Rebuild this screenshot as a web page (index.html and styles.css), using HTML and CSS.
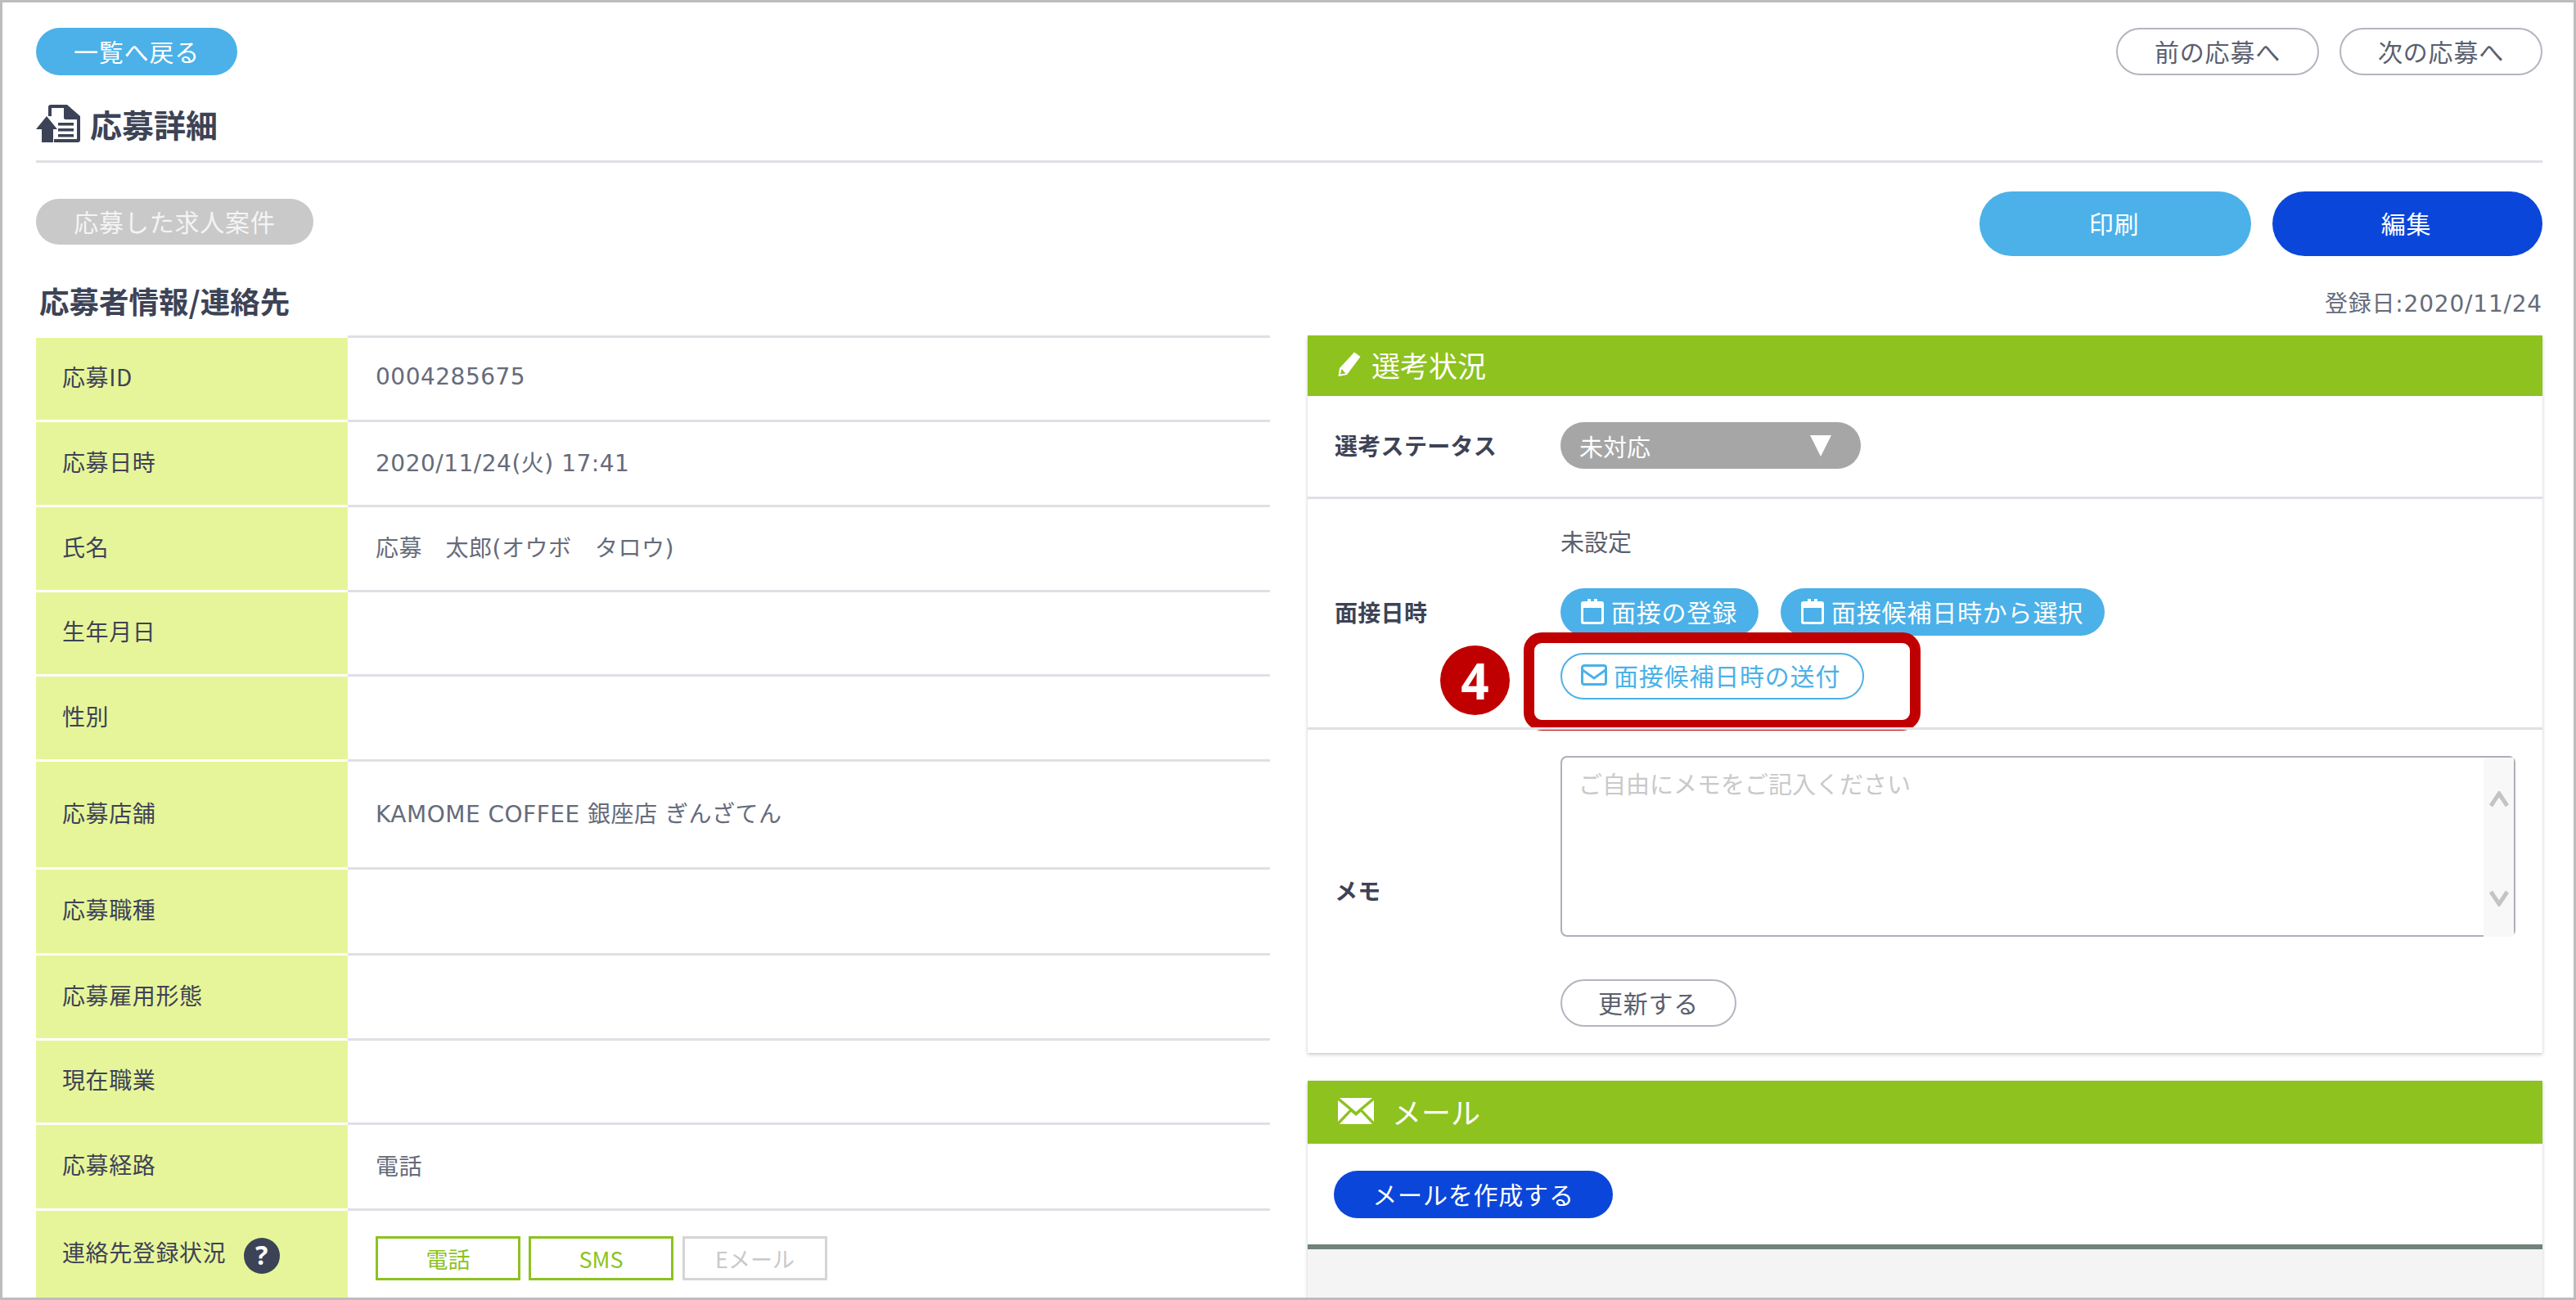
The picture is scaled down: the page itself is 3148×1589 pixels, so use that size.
FILE: index.html
```html
<!DOCTYPE html>
<html lang="ja">
<head>
<meta charset="utf-8">
<title>応募詳細</title>
<link rel="stylesheet" href="styles.css">
</head>
<body>
<div class="frame">
  <div class="topbar">
    <a class="pill pill-sky back">一覧へ戻る</a>
    <div class="nav">
      <a class="pill pill-line nav-btn">前の応募へ</a>
      <a class="pill pill-line nav-btn">次の応募へ</a>
    </div>
  </div>
  <div class="title">
    <svg class="title-icon" viewBox="0 0 56 46" aria-hidden="true">
      <path class="ink" d="M15 14V3a3 3 0 0 1 3-3h20l16 14v29a3 3 0 0 1-3 3H22v-4h28V18H36a2 2 0 0 1-2-2V4H19v10z"/>
      <path class="ink" d="M38 5.500V14h10z"/>
      <path class="ink" d="M13 14 26 30h-5v16H7V30H0z"/>
      <path class="ink" d="M27 22h19v3.500H27zM27 29h19v3.500H27zM27 36h19v3.500H27z"/>
    </svg>
    <h1>応募詳細</h1>
  </div>
  <div class="toolbar">
    <a class="pill job">応募した求人案件</a>
    <div class="actions">
      <a class="pill pill-sky action">印刷</a>
      <a class="pill pill-blue action edit">編集</a>
    </div>
  </div>
  <div class="section-head">
    <h2>応募者情報/連絡先</h2>
    <span class="regdate">登録日:2020/11/24</span>
  </div>
  <div class="columns">
    <div class="table">
      <div class="row short"><div class="th">応募ID</div><div class="td">0004285675</div></div>
      <div class="row"><div class="th">応募日時</div><div class="td">2020/11/24(火) 17:41</div></div>
      <div class="row"><div class="th">氏名</div><div class="td">応募　太郎(オウボ　タロウ)</div></div>
      <div class="row short"><div class="th">生年月日</div><div class="td"></div></div>
      <div class="row"><div class="th">性別</div><div class="td"></div></div>
      <div class="row tall"><div class="th">応募店舗</div><div class="td">KAMOME COFFEE 銀座店 ぎんざてん</div></div>
      <div class="row long"><div class="th">応募職種</div><div class="td"></div></div>
      <div class="row"><div class="th">応募雇用形態</div><div class="td"></div></div>
      <div class="row short"><div class="th">現在職業</div><div class="td"></div></div>
      <div class="row long"><div class="th">応募経路</div><div class="td">電話</div></div>
      <div class="row last">
        <div class="th">連絡先登録状況
          <svg class="help" viewBox="0 0 44 44" aria-hidden="true"><circle class="ink" cx="22" cy="22" r="22"/><text class="help-mark" x="22" y="33">?</text></svg>
        </div>
        <div class="td tags">
          <span class="tag on">電話</span>
          <span class="tag on">SMS</span>
          <span class="tag off">Eメール</span>
        </div>
      </div>
    </div>
    <div class="side">
      <section class="panel">
        <header class="panel-head first">
          <svg class="pen" viewBox="0 0 30 32" aria-hidden="true">
            <path d="M21 1.500 28.500 7 12 29 1.500 31 3 21z M5.500 22 4 28.500 10.500 27.500 z" fill-rule="evenodd"/>
          </svg>
          <span>選考状況</span>
        </header>
        <div class="form-row status-row">
          <div class="form-label">選考ステータス</div>
          <div class="select"><span>未対応</span><svg class="caret" viewBox="0 0 26 26" aria-hidden="true"><path d="M0 0h26L13 26z"/></svg></div>
        </div>
        <div class="form-row interview-row">
          <div class="form-label">面接日時</div>
          <div class="interview">
            <div class="unset">未設定</div>
            <div class="btn-line">
              <a class="pill pill-sky chip">
                <svg class="cal" viewBox="0 0 30 32" aria-hidden="true"><path d="M4 4h5V1h4v3h4V1h4v3h5a3 3 0 0 1 3 3v22a3 3 0 0 1-3 3H4a3 3 0 0 1-3-3V7a3 3 0 0 1 3-3zM4 12v16a1 1 0 0 0 1 1h20a1 1 0 0 0 1-1V12z" fill-rule="evenodd"/></svg>
                面接の登録</a>
              <a class="pill pill-sky chip">
                <svg class="cal" viewBox="0 0 30 32" aria-hidden="true"><path d="M4 4h5V1h4v3h4V1h4v3h5a3 3 0 0 1 3 3v22a3 3 0 0 1-3 3H4a3 3 0 0 1-3-3V7a3 3 0 0 1 3-3zM4 12v16a1 1 0 0 0 1 1h20a1 1 0 0 0 1-1V12z" fill-rule="evenodd"/></svg>
                面接候補日時から選択</a>
            </div>
            <div class="btn-line send-line">
              <a class="pill chip chip-line">
                <svg class="env" viewBox="0 0 32 26" aria-hidden="true"><path d="M4 1.500h24a2.500 2.500 0 0 1 2.500 2.500v18a2.500 2.500 0 0 1-2.500 2.500H4A2.500 2.500 0 0 1 1.500 22V4A2.500 2.500 0 0 1 4 1.500zM2 7l14 10L30 7"/></svg>
                面接候補日時の送付</a>
            </div>
          </div>
          <div class="callout" aria-hidden="true"></div>
          <div class="badge">4</div>
        </div>
        <div class="form-row memo-row">
          <div class="form-label">メモ</div>
          <div class="memo">
            <div class="memo-box">
              <textarea class="memo-input" placeholder="ご自由にメモをご記入ください"></textarea>
              <div class="scrollbar" aria-hidden="true">
                <svg viewBox="0 0 26 20"><path d="M3 18 13 3l10 15"/></svg>
                <svg viewBox="0 0 26 20"><path d="M3 2l10 15L23 2"/></svg>
              </div>
            </div>
            <a class="pill pill-line update">更新する</a>
          </div>
        </div>
      </section>
      <section class="panel mail-panel">
        <header class="panel-head">
          <svg class="mail-icon" viewBox="0 0 44 32" aria-hidden="true">
            <path d="M2 0h40L22 17z"/><path d="M0 3v26l14-14.500z"/><path d="M44 3v26L30 14.500z"/><path d="M16 17 22 22l6-5 14 15H2z"/>
          </svg>
          <span>メール</span>
        </header>
        <div class="mail-body"><a class="pill pill-blue mail-btn">メールを作成する</a></div>
        <div class="mail-list"></div>
      </section>
    </div>
  </div>
</div>
</body>
</html>
```

FILE: styles.css
```css
* { box-sizing: border-box; }
html, body { margin: 0; padding: 0; background: #fff; }
body {
  font-family: "Noto Sans CJK JP", "Noto Sans", sans-serif;
  color: #3d4356;
  font-size: 28px;
}
.frame {
  width: 3148px;
  height: 1589px;
  border: 3px solid #bdbdbd;
  padding: 31px 38px 0 41px;
  overflow: hidden;
  background: #fff;
}
.ink { fill: #3d4356; }

.pill {
  display: flex;
  align-items: center;
  justify-content: center;
  border-radius: 999px;
  white-space: nowrap;
  font-size: 30px;
  letter-spacing: 0.8px;
  padding-bottom: 3px;
}
.pill-sky { background: #4bb1e8; color: #fff; }
.pill-blue { background: #0a46da; color: #fff; }
.pill-line { background: #fff; border: 2px solid #b4b5c0; color: #5b5f6e; }

.topbar { display: flex; justify-content: space-between; height: 58px; }
.back { width: 246px; }
.nav { display: flex; gap: 25px; }
.nav-btn { width: 248px; }

.title {
  height: 107px;
  display: flex;
  align-items: flex-start;
  gap: 10px;
  padding-top: 36px;
  border-bottom: 3px solid #dfe0e6;
}
.title-icon { width: 56px; height: 46px; flex: none; }
.title h1 { margin: -2px 0 0; font-size: 39px; line-height: 50px; font-weight: 700; }

.toolbar {
  display: flex;
  justify-content: space-between;
  align-items: flex-start;
  height: 114px;
  padding-top: 35px;
}
.job { width: 339px; height: 56px; margin-top: 9px; background: #c9c9c9; color: #f4f4f4; }
.actions { display: flex; gap: 26px; }
.action { width: 332px; height: 79px; padding-right: 3px; }
.edit { width: 330px; }

.section-head {
  height: 97px;
  display: flex;
  justify-content: space-between;
  align-items: flex-end;
  padding: 0 0 17px 4px;
}
.section-head h2 { margin: 0; font-size: 36.500px; line-height: 50px; font-weight: 700; }
.regdate {
  font-family: "DejaVu Sans", "Noto Sans CJK JP", sans-serif;
  font-size: 28px;
  line-height: 40px;
  letter-spacing: 0.8px;
  color: #666b7a;
  margin-bottom: 1px;
}

.columns { display: grid; grid-template-columns: 1508px 1fr; gap: 46px; }

.table { display: flex; flex-direction: column; }
.row { display: grid; grid-template-columns: 381px 1fr; height: 104px; }
.row.short { height: 103px; }
.row.tall { height: 132px; }
.row.long { height: 105px; }
.row.last { height: 120px; }
.th {
  display: flex;
  align-items: center;
  padding: 0 0 6px 32px;
  background: #e7f59a;
  border-top: 3px solid #fff;
  font-size: 28px;
  letter-spacing: 0.6px;
  color: #3d4356;
}
.td {
  display: flex;
  align-items: center;
  padding: 0 0 5px 34px;
  border-top: 3px solid #dfe0e6;
  font-family: "DejaVu Sans", "Noto Sans CJK JP", sans-serif;
  font-size: 28px;
  color: #666b7a;
  letter-spacing: 0.5px;
}
.row.last .th { align-items: flex-start; padding-top: 30px; }
.help { width: 44px; height: 44px; margin-left: 22px; margin-top: 3px; flex: none; }
.help-mark { fill: #fff; font-size: 32px; font-weight: 700; text-anchor: middle; font-family: "Noto Sans", sans-serif; }
.tags { align-items: flex-start; padding-top: 31px; gap: 10px; letter-spacing: 0; font-family: "Noto Sans CJK JP", sans-serif; }
.tag {
  width: 177px;
  height: 54px;
  display: flex;
  align-items: center;
  justify-content: center;
  font-size: 27px;
  background: #fff;
}
.tag.on { border: 3px solid #8dc21f; color: #8dc21f; }
.tag.off { border: 3px solid #d5d5d5; color: #c9c9c9; }
.tag.off { margin-left: 1px; }

.side { display: flex; flex-direction: column; gap: 34px; }
.panel { background: #fff; box-shadow: 0 2px 4px rgba(60, 60, 80, 0.28); }
.panel-head {
  height: 77px;
  background: #8dc21f;
  color: #fff;
  display: flex;
  align-items: center;
  font-size: 36px;
  padding: 0 0 4px 37px;
  gap: 14px;
}
.panel-head.first { height: 74px; padding-left: 36px; gap: 12px; }
.panel-head.first span { font-size: 35px; }
.pen { width: 30px; height: 32px; fill: #fff; }
.mail-icon { width: 44px; height: 32px; fill: #fff; margin-right: 8px; }

.form-row {
  display: grid;
  grid-template-columns: 309px 1fr;
  align-items: center;
  border-top: 3px solid #dfe0e6;
  position: relative;
}
.panel-head + .form-row { border-top: 0; }
.form-label { padding: 0 0 3px 33px; font-size: 28px; font-weight: 700; letter-spacing: 0.3px; color: #3d4356; }
.status-row { height: 123px; }
.select {
  width: 367px;
  height: 57px;
  background: #a6a6a6;
  color: #fff;
  border-radius: 999px;
  display: flex;
  align-items: center;
  justify-content: space-between;
  padding: 0 36px 0 23px;
  font-size: 29px;
  margin-top: -2px;
}
.caret { width: 26px; height: 26px; fill: #fff; }

.interview-row { height: 282px; }
.interview { display: flex; flex-direction: column; padding-top: 31px; align-self: start; }
.unset { font-size: 29px; line-height: 40px; color: #5b5f6e; }
.btn-line { display: flex; gap: 27px; margin-top: 38px; }
.send-line { margin-top: 21px; }
.chip { height: 58px; padding: 0 26px 3px 24px; gap: 8px; }
.chip-line { background: #fff; border: 2px solid #4bb1e8; color: #4bb1e8; padding: 0 27px 3px 23px; height: 57px; }
.cal { width: 30px; height: 32px; fill: #fff; }
.env { width: 32px; height: 26px; fill: none; stroke: #4bb1e8; stroke-width: 3; }
.callout {
  position: absolute;
  left: 264px;
  top: 163px;
  width: 485px;
  height: 120px;
  border: 13px solid #c00000;
  border-radius: 22px;
}
.badge {
  position: absolute;
  left: 162px;
  top: 179px;
  width: 85px;
  height: 85px;
  border-radius: 50%;
  background: #c00000;
  color: #fff;
  font-family: "Open Sans", sans-serif;
  font-weight: 700;
  font-size: 60px;
  display: flex;
  align-items: center;
  justify-content: center;
}

.memo-row { height: 398px; }
.memo { align-self: start; padding-top: 32px; padding-right: 33px; }
.memo-box { position: relative; height: 221px; }
.memo-input {
  display: block;
  width: 100%;
  height: 100%;
  border: 2px solid #aeafba;
  border-radius: 8px;
  padding: 10px 20px;
  font-family: inherit;
  font-size: 29px;
  resize: none;
  outline: none;
  overflow: hidden;
  background: #fff;
}
.memo-input::placeholder { color: #c9c9c9; }
.scrollbar {
  position: absolute;
  top: 2px;
  right: 2px;
  bottom: 0;
  width: 37px;
  background: #f8f8f8;
  display: flex;
  flex-direction: column;
  justify-content: space-between;
  align-items: center;
  padding: 41px 0 37px;
}
.scrollbar svg { width: 26px; height: 20px; fill: none; stroke: #c4c4c4; stroke-width: 5; }
.update { width: 215px; height: 58px; margin-top: 52px; }

.mail-body { height: 123px; padding: 33px 0 0 32px; }
.mail-btn { width: 341px; height: 58px; }
.mail-list { height: 70px; border-top: 6px solid #6f8379; background: #f4f4f4; }
```
